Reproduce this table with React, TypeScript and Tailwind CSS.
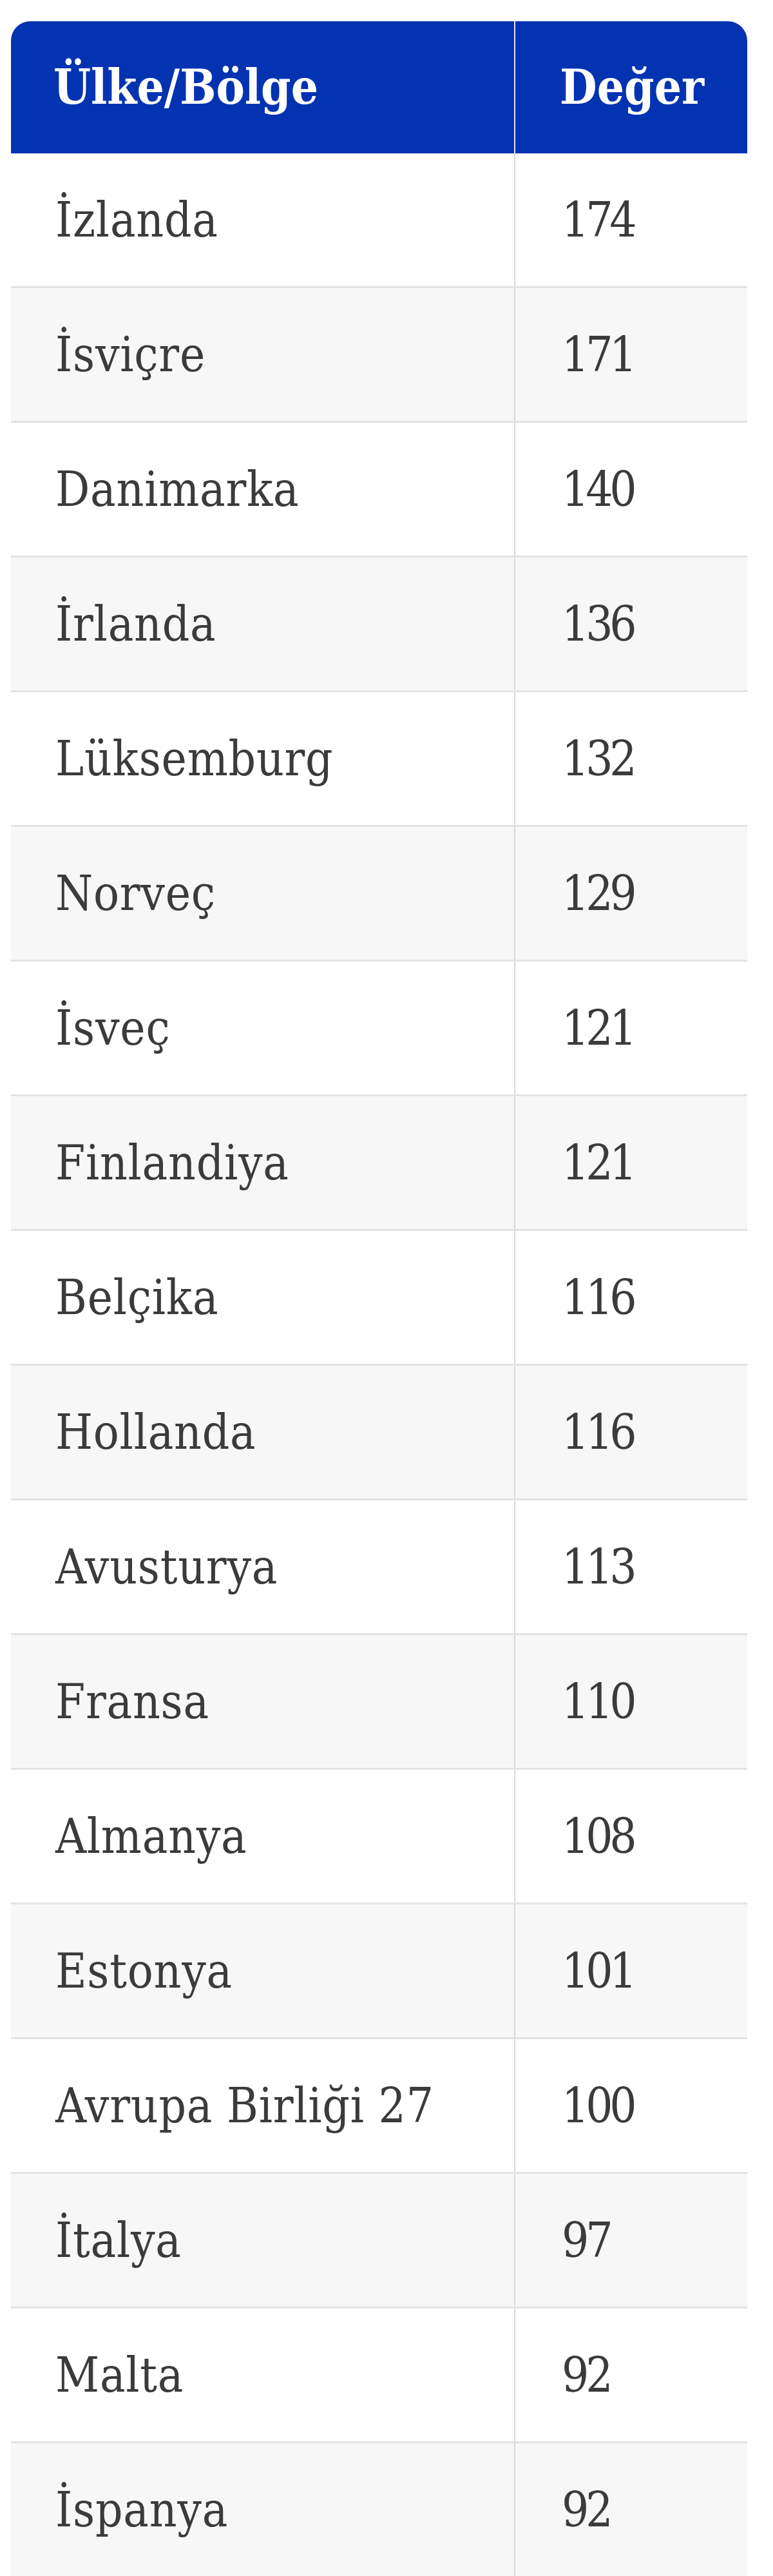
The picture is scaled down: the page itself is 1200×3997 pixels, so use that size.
const rows: [string, string][] = [
  ["İzlanda", "174"],
  ["İsviçre", "171"],
  ["Danimarka", "140"],
  ["İrlanda", "136"],
  ["Lüksemburg", "132"],
  ["Norveç", "129"],
  ["İsveç", "121"],
  ["Finlandiya", "121"],
  ["Belçika", "116"],
  ["Hollanda", "116"],
  ["Avusturya", "113"],
  ["Fransa", "110"],
  ["Almanya", "108"],
  ["Estonya", "101"],
  ["Avrupa Birliği 27", "100"],
  ["İtalya", "97"],
  ["Malta", "92"],
  ["İspanya", "92"],
];

export default function App() {
  return (
    <div className="bg-white min-h-screen pt-[33px] pl-[17px] pr-[40px] font-['DejaVu_Serif_Condensed','DejaVu_Serif',serif]">
      <div className="w-[1143px]">
        <div className="flex h-[205px] bg-[#0433b2] text-white font-bold text-[74px] rounded-t-[30px] overflow-hidden">
          <div className="w-[783px] flex items-center pl-[66px] border-r-[2px] border-[#dfe6f5]">
            Ülke/Bölge
          </div>
          <div className="flex-1 flex items-center pl-[69px]">Değer</div>
        </div>
        {rows.map(([name, value], i) => (
          <div
            key={name}
            className={`flex h-[209px] border-b-[3px] border-[#e3e3e3] text-[74px] text-[#3b3b3b] ${
              i % 2 === 1 ? "bg-[#f7f7f7]" : "bg-white"
            }`}
          >
            <div className="w-[783px] flex items-center pl-[69px] tracking-[0.01em] border-r-[2px] border-[#dadada]">
              {name}
            </div>
            <div className="flex-1 flex items-center pl-[72px] tracking-[-0.07em]">
              {value}
            </div>
          </div>
        ))}
      </div>
    </div>
  );
}
